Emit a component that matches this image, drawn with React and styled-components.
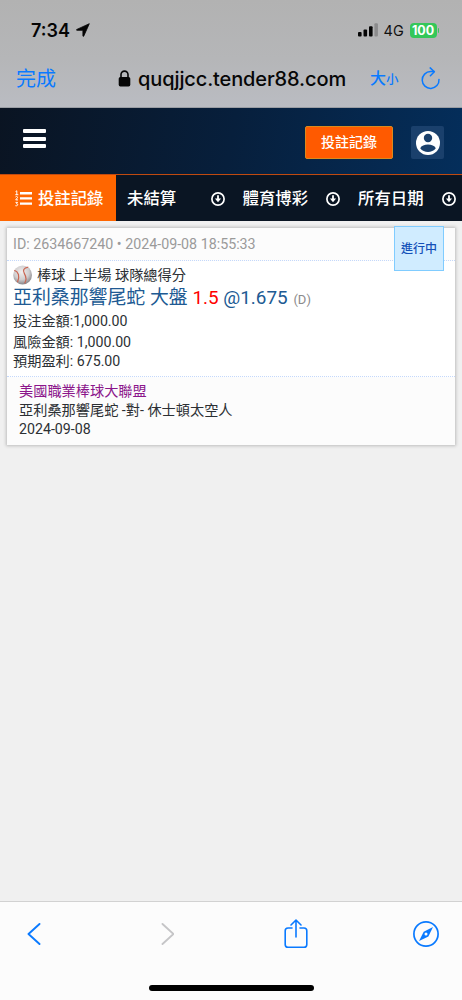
import React from 'react';
import styled, { createGlobalStyle } from 'styled-components';

const GlobalStyle = createGlobalStyle`
  * {
    box-sizing: border-box;
  }
  body {
    margin: 0;
    background: #f0f0f0;
    font-family: Roboto, 'Noto Sans CJK TC', sans-serif;
  }
  svg {
    display: block;
    flex: none;
  }
`;

const Screen = styled.div`
  display: flex;
  flex-direction: column;
  width: 462px;
  height: 1000px;
  overflow: hidden;
`;

const BrowserTop = styled.header`
  flex: none;
  height: 108px;
  background: linear-gradient(#b2b2b2, #b5b6b8 55%, #babcc2);
  border-bottom: 1px solid #9a9da3;
  font-family: Inter, 'Noto Sans CJK TC', sans-serif;
`;

const StatusBar = styled.div`
  display: flex;
  align-items: center;
  height: 60px;
  padding: 0 23px 0 31px;
`;

const Clock = styled.span`
  width: 45px;
  font-size: 18px;
  font-weight: 600;
  color: #050505;
`;

const StatusRight = styled.div`
  display: flex;
  align-items: center;
  margin-left: auto;
`;

const Network = styled.span`
  width: 26px;
  margin-left: 6px;
  font-size: 14.5px;
  letter-spacing: 0.2px;
  color: #111;
`;

const Battery = styled.span`
  width: 27px;
  height: 15px;
  border-radius: 4px;
  background: #34c759;
  color: #fff;
  font-size: 12.5px;
  font-weight: 700;
  line-height: 15px;
  text-align: center;
`;

const BatteryCap = styled.span`
  width: 1.5px;
  height: 5px;
  margin-left: 1px;
  border-radius: 0 2px 2px 0;
  background: #34c759;
`;

const AddressBar = styled.div`
  display: flex;
  align-items: center;
  height: 37px;
  padding: 0 21px 0 16px;
  color: #0a7aff;
`;

const Done = styled.span`
  width: 102px;
  font-size: 20px;
  line-height: 30px;
`;

const Address = styled.span`
  width: 232px;
  margin-left: 7px;
  font-size: 20px;
  font-weight: 500;
  letter-spacing: -0.12px;
  color: #070707;
  white-space: nowrap;
`;

const TextSize = styled.span`
  width: 51px;
  font-size: 16px;
  font-weight: 500;
  line-height: 24px;
  white-space: nowrap;
  > small {
    font-size: 12.5px;
  }
`;

const SiteHeader = styled.div`
  flex: none;
  display: flex;
  align-items: center;
  height: 67px;
  padding: 3px 18px 0 23px;
  background: linear-gradient(100deg, #0a1422, #071f3c 50%, #042e5b);
  border-bottom: 1px solid #c04a10;
`;

const Burger = styled.div`
  display: grid;
  gap: 3.5px;
  margin: 0 auto 8px 0;
  > i {
    width: 23px;
    height: 4px;
    border-radius: 1px;
    background: #fff;
  }
`;

const RecordButton = styled.button`
  width: 88px;
  height: 33px;
  margin-right: 18px;
  padding: 0;
  border: 1px solid #d98a1c;
  border-radius: 2px;
  background: #ff5a00;
  color: #fff;
  font-family: inherit;
  font-size: 14px;
  font-weight: 500;
  line-height: 31px;
`;

const Account = styled.div`
  display: grid;
  place-items: center;
  width: 33px;
  height: 33px;
  border-radius: 2px;
  background: #1a406c;
`;

const Tabs = styled.nav`
  flex: none;
  display: flex;
  height: 46px;
  background: #0a1523;
`;

const Tab = styled.div`
  flex: none;
  display: flex;
  align-items: center;
  justify-content: space-between;
  width: 115.5px;
  padding: ${props => (props.$active ? '1px 12px 0 15px' : '1px 6.5px 0 11.5px')};
  background: ${props => (props.$active ? '#ff6600' : 'transparent')};
  color: #fff;
  font-size: 16.4px;
  font-weight: 500;
  line-height: 24px;
  white-space: nowrap;
`;

const Ticket = styled.article`
  flex: none;
  width: 448px;
  height: 217px;
  margin: 7px 0 0 7px;
  background: #fff;
  box-shadow: 0 0 3px 1px #bdbdbd;
  color: #2c3034;
  font-size: 14.2px;
`;

const TicketHead = styled.div`
  display: flex;
  justify-content: space-between;
  height: 33px;
  padding: 0 11px 0 6px;
  background: #fcfcfc;
  border-bottom: 1px dotted #c4d8fb;
  color: #9a9a9a;
  font-size: 14.25px;
  line-height: 33px;
`;

const State = styled.span`
  width: 50px;
  height: 45px;
  margin-top: -2px;
  border: 1px solid #80ccff;
  background: #d0ecff;
  color: #1450b8;
  font-size: 12px;
  font-weight: 500;
  line-height: 44px;
  text-align: center;
`;

const TicketBody = styled.div`
  height: 116px;
  padding: 4px 6px 0;
  border-bottom: 1px dotted #c4d8fb;
`;

const Line = styled.div`
  display: flex;
  align-items: center;
  gap: ${props => props.$gap || 0}px;
  height: ${props => props.$height || 19}px;
  line-height: 19px;
  color: ${props => props.$color || 'inherit'};
  white-space: pre;
`;

const Selection = styled.div`
  height: 25px;
  color: #205a93;
  font-size: 18.9px;
  line-height: 25px;
  white-space: nowrap;
  > b {
    color: #f00;
    font-weight: 400;
  }
  > small {
    margin-left: 1px;
    color: #8b8b8b;
    font-size: 13px;
  }
`;

const TicketFoot = styled.div`
  height: 68px;
  padding: 5px 12px 0;
  background: #fcfcfc;
`;

const BrowserBottom = styled.footer`
  flex: none;
  display: flex;
  flex-direction: column;
  justify-content: space-between;
  align-items: center;
  height: 99px;
  margin-top: auto;
  padding-bottom: 9px;
  border-top: 1px solid #d2d2d2;
  background: #fcfcfc;
`;

const Tools = styled.div`
  display: grid;
  grid-template-columns: 133px 124px 129px 26px;
  align-items: center;
  width: 100%;
  height: 64px;
  padding-left: 27px;
`;

const HomeBar = styled.div`
  width: 165px;
  height: 6px;
  border-radius: 3px;
  background: #000;
`;

function DownCircle() {
  return (
    <svg width="14" height="14" viewBox="0 0 14 14" fill="none" stroke="#fff">
      <circle cx="7" cy="7" r="6.1" strokeWidth="1.7" />
      <path d="M7 3.2v4" strokeWidth="1.8" />
      <path d="M3.9 6.5h6.2L7 10.2z" fill="#fff" stroke="none" />
    </svg>
  );
}

function NumberList() {
  return (
    <svg width="18" height="17" viewBox="0 0 18 17">
      <g fill="none" stroke="#fff" strokeWidth="1">
        <path d="M.6 1.5L1.8.8v4M.3 4.7h3M.5 7c.7-1 2.4-.5 2 .6L.7 9.9H3M.5 12.4h2.1l-1.1 1.4c2 0 1.5 2.6-1.1 1.9" />
      </g>
      <path d="M5 2.1h12v2.3H5zM5 7.3h12v2.3H5zM5 12.5h12v2.3H5z" fill="#fff" />
    </svg>
  );
}

function Baseball() {
  return (
    <svg width="20" height="20" viewBox="0 0 20 20">
      <defs>
        <radialGradient id="ball" cx="45%" cy="35%" r="65%">
          <stop offset="0" stopColor="#f2efee" />
          <stop offset=".6" stopColor="#d0cecf" />
          <stop offset="1" stopColor="#88868a" />
        </radialGradient>
      </defs>
      <circle cx="9.6" cy="10" r="9.4" fill="url(#ball)" />
      <g fill="none" stroke="#c96552" strokeWidth="1.2">
        <path d="M1.3 5.2c4.200 1.600 5.800 5.800 3.200 12" />
        <path d="M15.300 2.200C10.300 2.800 9.600 5.600 11.400 8.600s2.400 6.200.2 9.800" />
      </g>
    </svg>
  );
}

const filters = ['未結算', '體育博彩', '所有日期'];

function App() {
  return (
    <>
      <GlobalStyle />
      <Screen>
        <BrowserTop>
          <StatusBar>
            <Clock>7:34</Clock>
            <svg width="14" height="14" viewBox="0 0 14 14">
              <path d="M13.3.7L7.8 13q-.6 1-.9-.1V7.3H1q-1.2-.2-.1-.9z" fill="#050505" stroke="#050505" strokeWidth=".8" strokeLinejoin="round" />
            </svg>
            <StatusRight>
              <svg width="20" height="14" viewBox="0 0 20 14" fill="#050505">
                <rect x="0" y="9" width="3.6" height="4.5" rx="1" />
                <rect x="5.5" y="6.5" width="3.6" height="7" rx="1" />
                <rect x="11" y="3.3" width="3.6" height="10.2" rx="1" />
                <rect x="16.4" y=".3" width="3.5" height="13.2" rx="1" fill="#8b8b8c" />
              </svg>
              <Network>4G</Network>
              <Battery>100</Battery>
              <BatteryCap />
            </StatusRight>
          </StatusBar>
          <AddressBar>
            <Done>完成</Done>
            <svg width="13" height="17" viewBox="0 0 13 17">
              <rect x=".7" y="7" width="11.6" height="9.5" rx="1.7" fill="#070707" />
              <path d="M3 8V4.6a3.5 3.5 0 0 1 7 0V8" fill="none" stroke="#070707" strokeWidth="1.6" />
            </svg>
            <Address>quqjjcc.tender88.com</Address>
            <TextSize>
              大<small>小</small>
            </TextSize>
            <svg width="20" height="23" viewBox="0 0 20 23" fill="none" stroke="#0a7aff" strokeWidth="1.5" strokeLinecap="round" strokeLinejoin="round">
              <path d="M18 12.4a8.4 8.4 0 1 1-8.4-7.8h3.6" />
              <path d="M9.2.9l4.1 3.8-3.9 4.1" />
            </svg>
          </AddressBar>
        </BrowserTop>

        <SiteHeader>
          <Burger>
            <i />
            <i />
            <i />
          </Burger>
          <RecordButton type="button">投註記錄</RecordButton>
          <Account>
            <svg width="24" height="24" viewBox="0 0 24 24">
              <circle cx="12" cy="12" r="12" fill="#fff" />
              <circle cx="12" cy="7" r="4.2" fill="#1a406c" />
              <path d="M4.2 17.3c2-5 13.6-5 15.6 0-3.8 5-11.8 5-15.6 0z" fill="#1a406c" />
            </svg>
          </Account>
        </SiteHeader>

        <Tabs>
          <Tab $active>
            <NumberList />
            投註記錄
          </Tab>
          {filters.map(name => (
            <Tab key={name}>
              {name}
              <DownCircle />
            </Tab>
          ))}
        </Tabs>

        <Ticket>
          <TicketHead>
            ID: 2634667240 • 2024-09-08 18:55:33
            <State>進行中</State>
          </TicketHead>
          <TicketBody>
            <Line $height={20} $gap={4}>
              <Baseball />
              棒球 上半場 球隊總得分
            </Line>
            <Selection>
              亞利桑那響尾蛇 大盤 <b>1.5</b> @1.675 <small>(D)</small>
            </Selection>
            <Line $height={23}>投注金額:1,000.00</Line>
            <Line>風險金額: 1,000.00</Line>
            <Line>預期盈利: 675.00</Line>
          </TicketBody>
          <TicketFoot>
            <Line $color="#8b158b">美國職業棒球大聯盟</Line>
            <Line>亞利桑那響尾蛇 -對- 休士頓太空人</Line>
            <Line>2024-09-08</Line>
          </TicketFoot>
        </Ticket>

        <BrowserBottom>
          <Tools>
            <svg width="14" height="22" viewBox="0 0 14 22" fill="none" stroke="#0a7aff" strokeWidth="1.9" strokeLinecap="round" strokeLinejoin="round">
              <path d="M12.5 1L1.500 11l11 10" />
            </svg>
            <svg width="14" height="22" viewBox="0 0 14 22" fill="none" stroke="#c5c5c7" strokeWidth="1.9" strokeLinecap="round" strokeLinejoin="round">
              <path d="M2.500 1l11 10-11 10" />
            </svg>
            <svg width="24" height="30" viewBox="0 0 24 30" fill="none" stroke="#0a7aff" strokeWidth="1.6" strokeLinecap="round" strokeLinejoin="round">
              <path d="M8 9H4Q1.200 9 1.200 11.800v13.600q0 2.800 2.800 2.800h16q2.800 0 2.800-2.800V11.800Q22.800 9 20 9h-4" />
              <path d="M12 18V1.500M7 6l5-5 5 5" />
            </svg>
            <svg width="26" height="26" viewBox="0 0 26 26">
              <circle cx="13" cy="13" r="12.1" fill="none" stroke="#0a7aff" strokeWidth="1.7" />
              <path d="M20 6.100l-4.600 9.300-9.300 4.600 4.600-9.300z" fill="#0a7aff" />
              <circle cx="13" cy="13" r="1.5" fill="#fcfcfc" />
            </svg>
          </Tools>
          <HomeBar />
        </BrowserBottom>
      </Screen>
    </>
  );
}

export default App;
